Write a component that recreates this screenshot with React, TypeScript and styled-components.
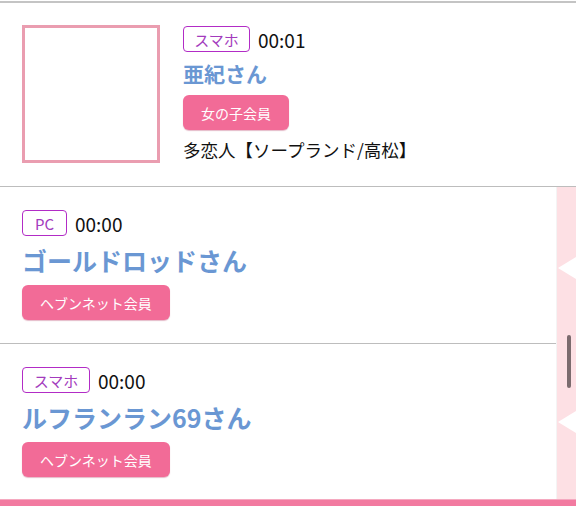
import React from "react";
import styled, { createGlobalStyle } from "styled-components";

const Global = createGlobalStyle`
  html, body { margin: 0; padding: 0; background: #ffffff; }
  body {
    font-family: "Noto Sans CJK JP", "Noto Sans", "Liberation Sans", sans-serif;
    color: #111;
    width: 576px;
    height: 506px;
    overflow: hidden;
  }
`;

const Page = styled.div`
  width: 576px;
  height: 506px;
  display: flex;
  flex-direction: column;
  background: #fff;
`;

const TopRule = styled.div`
  height: 2px;
  margin-top: 1px;
  background: #c4c4c4;
`;

const FeatureCard = styled.div`
  display: flex;
  align-items: flex-start;
  gap: 23px;
  padding: 22px 0 23px 22px;
  border-bottom: 1px solid #bdbdbd;
`;

const Photo = styled.div`
  width: 132px;
  height: 132px;
  border: 3px solid #ea9db0;
  background: #fff;
  flex: none;
`;

const Info = styled.div`
  display: flex;
  flex-direction: column;
  align-items: flex-start;
  padding-top: 1px;
`;

const MetaRow = styled.div`
  display: flex;
  align-items: center;
  gap: 8px;
  height: 26px;
`;

const Device = styled.span<{ $w: number }>`
  display: inline-flex;
  align-items: center;
  justify-content: center;
  box-sizing: border-box;
  height: 26px;
  min-width: ${(p) => p.$w}px;
  padding: 0 8px;
  border: 1.5px solid #b22cc6;
  border-radius: 4px;
  color: #a33bbd;
  font-size: 15px;
  font-weight: 400;
  line-height: 1;
`;

const Time = styled.span`
  font-size: 19px;
  color: #111;
  line-height: 1;
`;

const Name = styled.div<{ $size: number; $h: number; $gap: number }>`
  font-size: ${(p) => p.$size}px;
  line-height: ${(p) => p.$h}px;
  height: ${(p) => p.$h}px;
  margin-top: ${(p) => p.$gap}px;
  font-weight: 600;
  color: #6a97d3;
  white-space: nowrap;
`;

const Member = styled.span<{ $gap: number }>`
  display: inline-flex;
  align-items: center;
  height: 35px;
  margin-top: ${(p) => p.$gap}px;
  padding: 0 18px;
  border-radius: 6px;
  background: #f26b97;
  color: #fff;
  font-size: 14px;
  font-weight: 400;
  line-height: 1;
  box-shadow: 0 1px 1px rgba(180, 60, 100, 0.35);
`;

const Shop = styled.div`
  margin-top: 8px;
  font-size: 17.5px;
  line-height: 24px;
  color: #111;
  white-space: nowrap;
`;

const Lower = styled.div`
  display: flex;
  flex: 1;
  min-height: 0;
`;

const List = styled.div`
  flex: 1;
  display: flex;
  flex-direction: column;
  border-right: 1px solid #f4f4f4;
`;

const Entry = styled.div<{ $last?: boolean }>`
  display: flex;
  flex-direction: column;
  align-items: flex-start;
  padding: 23px 0 ${(p) => (p.$last ? 0 : 23)}px 22px;
  border-bottom: ${(p) => (p.$last ? "none" : "1px solid #bdbdbd")};
`;

const Strip = styled.div`
  position: relative;
  width: 19px;
  flex: none;
  background: #fde0e4;
`;

const Arrow = styled.svg<{ $top: number }>`
  position: absolute;
  left: 1px;
  top: ${(p) => p.$top}px;
`;

const Thumb = styled.div`
  position: absolute;
  left: 10px;
  top: 148px;
  width: 4px;
  height: 53px;
  border-radius: 2px;
  background: #7b6b6e;
`;

const BottomBar = styled.div`
  height: 6px;
  background: #f27aa0;
  border-top: 1px solid #f5a9c0;
`;

type Person = { device: string; w: number; time: string; name: string; member: string };

const people: Person[] = [
  { device: "PC", w: 45, time: "00:00", name: "ゴールドロッドさん", member: "ヘブンネット会員" },
  { device: "スマホ", w: 68, time: "00:00", name: "ルフランラン69さん", member: "ヘブンネット会員" },
];

export default function App() {
  return (
    <Page>
      <Global />
      <TopRule />
      <FeatureCard>
        <Photo />
        <Info>
          <MetaRow>
            <Device $w={67}>スマホ</Device>
            <Time>00:01</Time>
          </MetaRow>
          <Name $size={21} $h={30} $gap={6}>亜紀さん</Name>
          <Member $gap={7}>女の子会員</Member>
          <Shop>多恋人【ソープランド/高松】</Shop>
        </Info>
      </FeatureCard>
      <Lower>
        <List>
          {people.map((p, i) => (
            <Entry key={i} $last={i === people.length - 1}>
              <MetaRow>
                <Device $w={p.w}>{p.device}</Device>
                <Time>{p.time}</Time>
              </MetaRow>
              <Name $size={25} $h={34} $gap={7}>{p.name}</Name>
              <Member $gap={8}>{p.member}</Member>
            </Entry>
          ))}
        </List>
        <Strip>
          <Arrow $top={70} width="18" height="22" viewBox="0 0 18 22">
            <polygon points="0,11 18,0 18,22" fill="#ffffff" />
          </Arrow>
          <Arrow $top={224} width="18" height="22" viewBox="0 0 18 22">
            <polygon points="0,11 18,0 18,22" fill="#ffffff" />
          </Arrow>
          <Thumb />
        </Strip>
      </Lower>
      <BottomBar />
    </Page>
  );
}
